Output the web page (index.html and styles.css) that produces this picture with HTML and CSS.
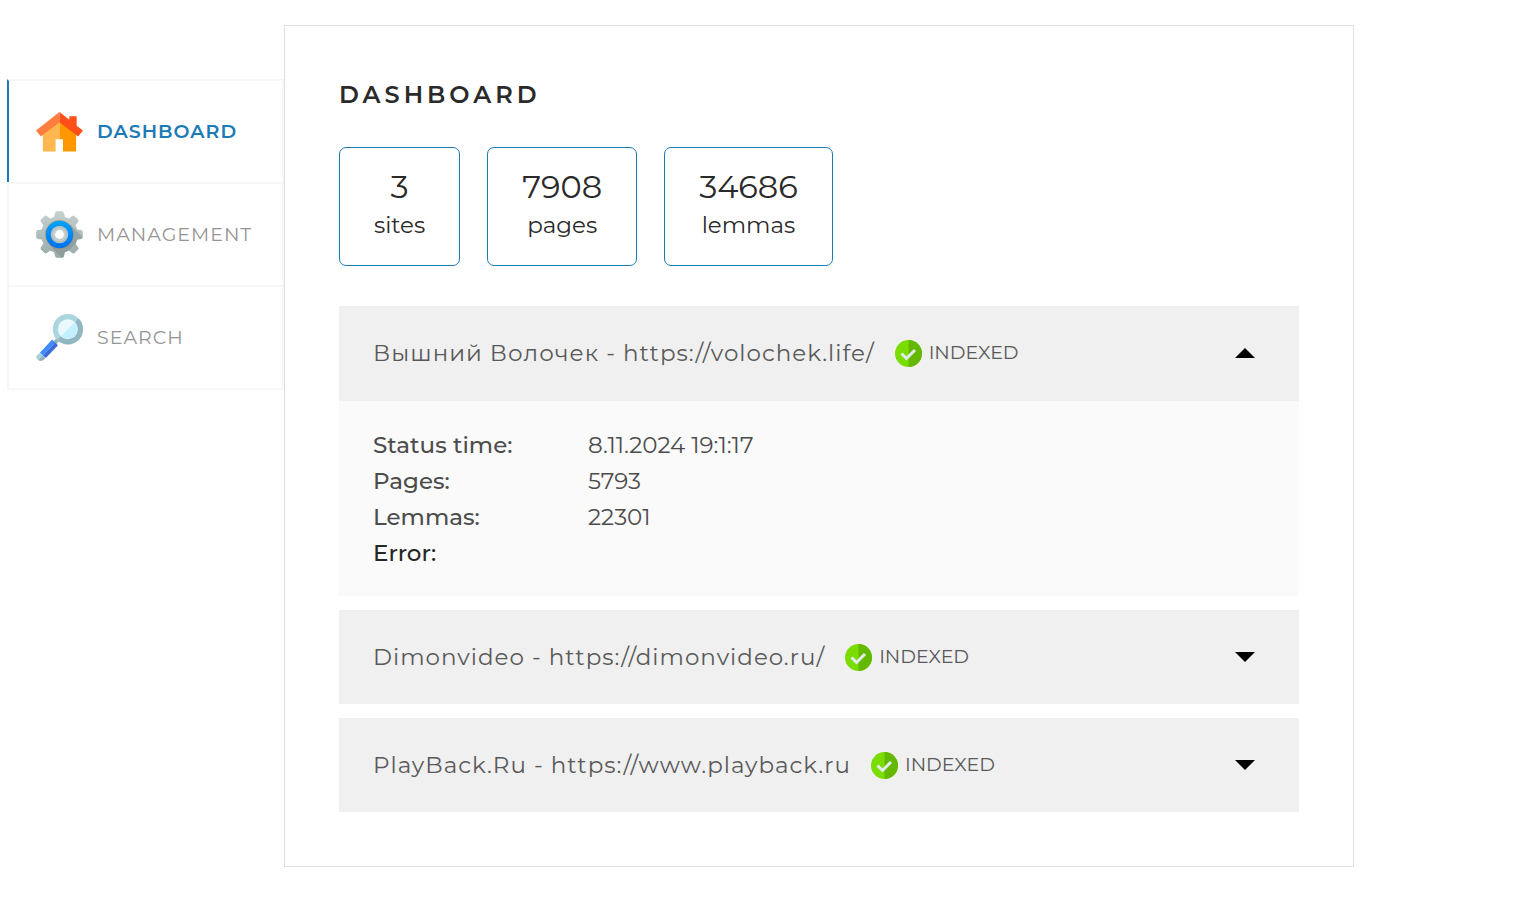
FILE: index.html
```html
<!DOCTYPE html>
<html lang="en">
<head>
<meta charset="utf-8">
<meta name="viewport" content="width=device-width, initial-scale=1">
<title>Dashboard</title>
<link rel="stylesheet" href="styles.css">
</head>
<body>
<div class="page">
  <nav class="tabs" aria-label="Sections">
    <a class="tab tab-active" href="#dashboard" aria-current="page">
      <svg class="tab-icon" viewBox="0 0 48 48" aria-hidden="true">
        <path fill="#ffb74f" d="M24 12 7 26v18.500h13V32h4z"/>
        <path fill="#ff9800" d="M24 12v20h3.500v12.500H41V26z"/>
        <path fill="#ff7d3f" d="M24 4 0 23l5 6 19-14.500z"/>
        <path fill="#ff4f19" d="M24 4v10.500L43 29l5-6-6.500-5V8.500H34V12z"/>
      </svg>
      <span class="tab-text">DASHBOARD</span>
    </a>
    <a class="tab" href="#management">
      <svg class="tab-icon" viewBox="0 0 48 48" aria-hidden="true">
        <defs>
          <linearGradient id="gear" x1="0" y1="0" x2="0" y2="1"><stop offset="0" stop-color="#c5d1d1"/><stop offset="1" stop-color="#9aa9a9"/></linearGradient>
          <linearGradient id="ring" x1="0" y1="0" x2="0" y2="1"><stop offset="0" stop-color="#00a2ff"/><stop offset="1" stop-color="#0070ea"/></linearGradient>
        </defs>
        <path fill="url(#gear)" d="M19.500 2q0-1.800 2-1.800h5q2 0 2 1.800l1 4 4 1.700 3.500-2.600q1.300-1 2.600.2l3.200 3.200q1.200 1.300.2 2.600L40.500 14.500l1.700 4.500 3.800.5q1.800 0 1.800 2v5q0 2-1.800 2l-3.800.5-1.700 4.500 2.500 3.400q1 1.300-.2 2.600l-3.200 3.200q-1.300 1.200-2.600.2L33.500 40.300l-4 1.700-1 4q0 1.800-2 1.800h-5q-2 0-2-1.800l-1-4-4-1.700-3.500 2.600q-1.300 1-2.600-.2l-3.200-3.200q-1.200-1.300-.2-2.600L7.500 33.500 5.800 29 2 28.500q-1.800 0-1.800-2v-5q0-2 1.800-2L5.800 19l1.700-4.500L5 11.100q-1-1.300.2-2.600l3.200-3.200q1.300-1.200 2.600-.2l3.500 2.600 4-1.700z"/>
        <path fill="#768787" opacity=".45" d="m35 14 11.500 11.500Q47.500 28.500 46 28.500l-3.800.5-1.700 4.500-7 6.800-4 1.700-1 4q0 1.800-2 1.800L13.500 34.500z"/>
        <circle cx="24" cy="24" r="14.800" fill="#b58c62" opacity=".6"/>
        <circle cx="24" cy="24" r="14" fill="url(#ring)"/>
        <circle cx="24" cy="24" r="9" fill="#b4c0c3"/>
        <circle cx="24" cy="24" r="7" fill="#c5cece"/>
        <circle cx="24" cy="24" r="4.500" fill="#fff"/>
      </svg>
      <span class="tab-text">MANAGEMENT</span>
    </a>
    <a class="tab" href="#search">
      <svg class="tab-icon" viewBox="0 0 48 48" aria-hidden="true">
        <path fill="#93b7c0" d="m20.500 25 3 3-4 4-3-3z"/>
        <path fill="#3f8cff" d="M4 39.500 16.500 26l3 3L7 42.500z"/>
        <path fill="#3c6bdb" d="m7 42.500 12.500-13.500 3 3-12.500 13z"/>
        <path fill="#a9d2dc" d="m4 39.500 3 3-5 4.500Q-1 44 1 42z"/>
        <path fill="#91b5be" d="m7 42.500 2.500 3Q6 49.500 2 47z"/>
        <circle cx="32.500" cy="15.500" r="15.400" fill="#abd5df"/>
        <path fill="#92b7c1" d="M43.500 4.700a15.400 15.400 0 0 1-21.900 21.900z"/>
        <circle cx="32.500" cy="15.500" r="10.200" fill="#e9f9fe"/>
        <path fill="#c2f0ff" d="M39.700 8.300a10.200 10.200 0 0 1-14.400 14.400z"/>
      </svg>
      <span class="tab-text">SEARCH</span>
    </a>
  </nav>

  <main class="panel" id="dashboard">
    <h1 class="title">DASHBOARD</h1>

    <div class="stats">
      <div class="stat"><strong class="stat-value">3</strong><span class="stat-label">sites</span></div>
      <div class="stat"><strong class="stat-value">7908</strong><span class="stat-label">pages</span></div>
      <div class="stat"><strong class="stat-value">34686</strong><span class="stat-label">lemmas</span></div>
    </div>

    <div class="sites">
      <section class="site">
        <button class="site-head site-head-open" type="button" aria-expanded="true" aria-controls="site-1">
          <span class="site-name">Вышний Волочек - https://volochek.life/</span>
          <svg class="status-icon" viewBox="0 0 27 27" aria-hidden="true"><circle cx="13.500" cy="13.500" r="13.500" fill="#7bdc00"/><path fill="#64b800" d="M13.500 0a13.500 13.500 0 0 1 0 27z"/><path fill="none" stroke="#e3ecef" stroke-width="3" d="m6.500 13.500 5 5L20 10"/></svg>
          <span class="status">INDEXED</span>
          <svg class="arrow" viewBox="0 0 20 10" aria-hidden="true"><path d="M0 10 10 0l10 10z"/></svg>
        </button>
        <dl class="details" id="site-1">
          <dt>Status time:</dt><dd>8.11.2024 19:1:17</dd>
          <dt>Pages:</dt><dd>5793</dd>
          <dt>Lemmas:</dt><dd>22301</dd>
          <dt class="error">Error:</dt><dd></dd>
        </dl>
      </section>
      <section class="site">
        <button class="site-head" type="button" aria-expanded="false">
          <span class="site-name">Dimonvideo - https://dimonvideo.ru/</span>
          <svg class="status-icon" viewBox="0 0 27 27" aria-hidden="true"><circle cx="13.500" cy="13.500" r="13.500" fill="#7bdc00"/><path fill="#64b800" d="M13.500 0a13.500 13.500 0 0 1 0 27z"/><path fill="none" stroke="#e3ecef" stroke-width="3" d="m6.500 13.500 5 5L20 10"/></svg>
          <span class="status">INDEXED</span>
          <svg class="arrow" viewBox="0 0 20 10" aria-hidden="true"><path d="M0 0h20L10 10z"/></svg>
        </button>
      </section>
      <section class="site">
        <button class="site-head" type="button" aria-expanded="false">
          <span class="site-name">PlayBack.Ru - https://www.playback.ru</span>
          <svg class="status-icon" viewBox="0 0 27 27" aria-hidden="true"><circle cx="13.500" cy="13.500" r="13.500" fill="#7bdc00"/><path fill="#64b800" d="M13.500 0a13.500 13.500 0 0 1 0 27z"/><path fill="none" stroke="#e3ecef" stroke-width="3" d="m6.500 13.500 5 5L20 10"/></svg>
          <span class="status">INDEXED</span>
          <svg class="arrow" viewBox="0 0 20 10" aria-hidden="true"><path d="M0 0h20L10 10z"/></svg>
        </button>
      </section>
    </div>
  </main>
</div>
</body>
</html>
```
FILE: styles.css
```css
* { box-sizing: border-box; }

body {
  margin: 0;
  background: #fff;
  color: #2a2a2a;
  font-family: Montserrat, Inter, "Open Sans", sans-serif;
  font-size: 23px;
  line-height: 36px;
}

.page {
  display: flex;
  align-items: flex-start;
  padding: 25px 185px 54px 7px;
}

.tabs {
  flex: none;
  width: 277px;
  margin-top: 54px;
  border: 2px solid #f7f7f7;
  border-width: 0 2px 2px 0;
}

.tab {
  display: flex;
  align-items: center;
  gap: 14px;
  min-height: 103px;
  padding-left: 27px;
  border-top: 2px solid #f7f7f7;
  border-left: 2px solid #f7f7f7;
  color: #959595;
  font-size: 19px;
  font-weight: 400;
  letter-spacing: 1px;
  text-decoration: none;
}

.tab-active {
  border-left-color: #1b7bb7;
  color: #1b7bb7;
  font-weight: 600;
}

.tab-icon {
  flex: none;
  width: 47px;
  height: 47px;
}

.panel {
  flex: 1;
  min-width: 0;
  padding: 54px;
  border: 1px solid #dfdfdf;
}

.title {
  margin: 0 0 38px;
  font-size: 24px;
  font-weight: 600;
  line-height: 29px;
  letter-spacing: 4px;
}

.stats {
  display: flex;
  gap: 27px;
  margin-bottom: 40px;
}

.stat {
  padding: 19px 34px 21px;
  border: 1px solid #1b7bb7;
  border-radius: 7px;
  text-align: center;
}

.stat-value,
.stat-label { display: block; }

.stat-value {
  font-size: 32px;
  font-weight: 400;
  line-height: 39px;
}

.stat-label { line-height: 38px; }

.sites {
  display: grid;
  gap: 14px;
}

.site-head {
  display: flex;
  align-items: center;
  width: 100%;
  padding: 29px 44px 29px 34px;
  border: 0;
  background: #f0f0f0;
  color: #595959;
  font: inherit;
  text-align: left;
  cursor: pointer;
}

.site-head-open { border-bottom: 1px solid #f0f0f0; }

.site-name { letter-spacing: 1px; }

.status-icon {
  flex: none;
  width: 27px;
  height: 27px;
  margin: 0 7px 0 20px;
}

.status { font-size: 19px; }

.arrow {
  flex: none;
  width: 20px;
  height: 10px;
  margin-left: auto;
}

.details {
  display: grid;
  grid-template-columns: 215px 1fr;
  margin: 0;
  padding: 26px 34px 25px;
  background: #fafafa;
  color: #4c4c4c;
}

.details dt { font-weight: 500; }

.details dd { margin: 0; }

.details .error { color: #262626; }
```
